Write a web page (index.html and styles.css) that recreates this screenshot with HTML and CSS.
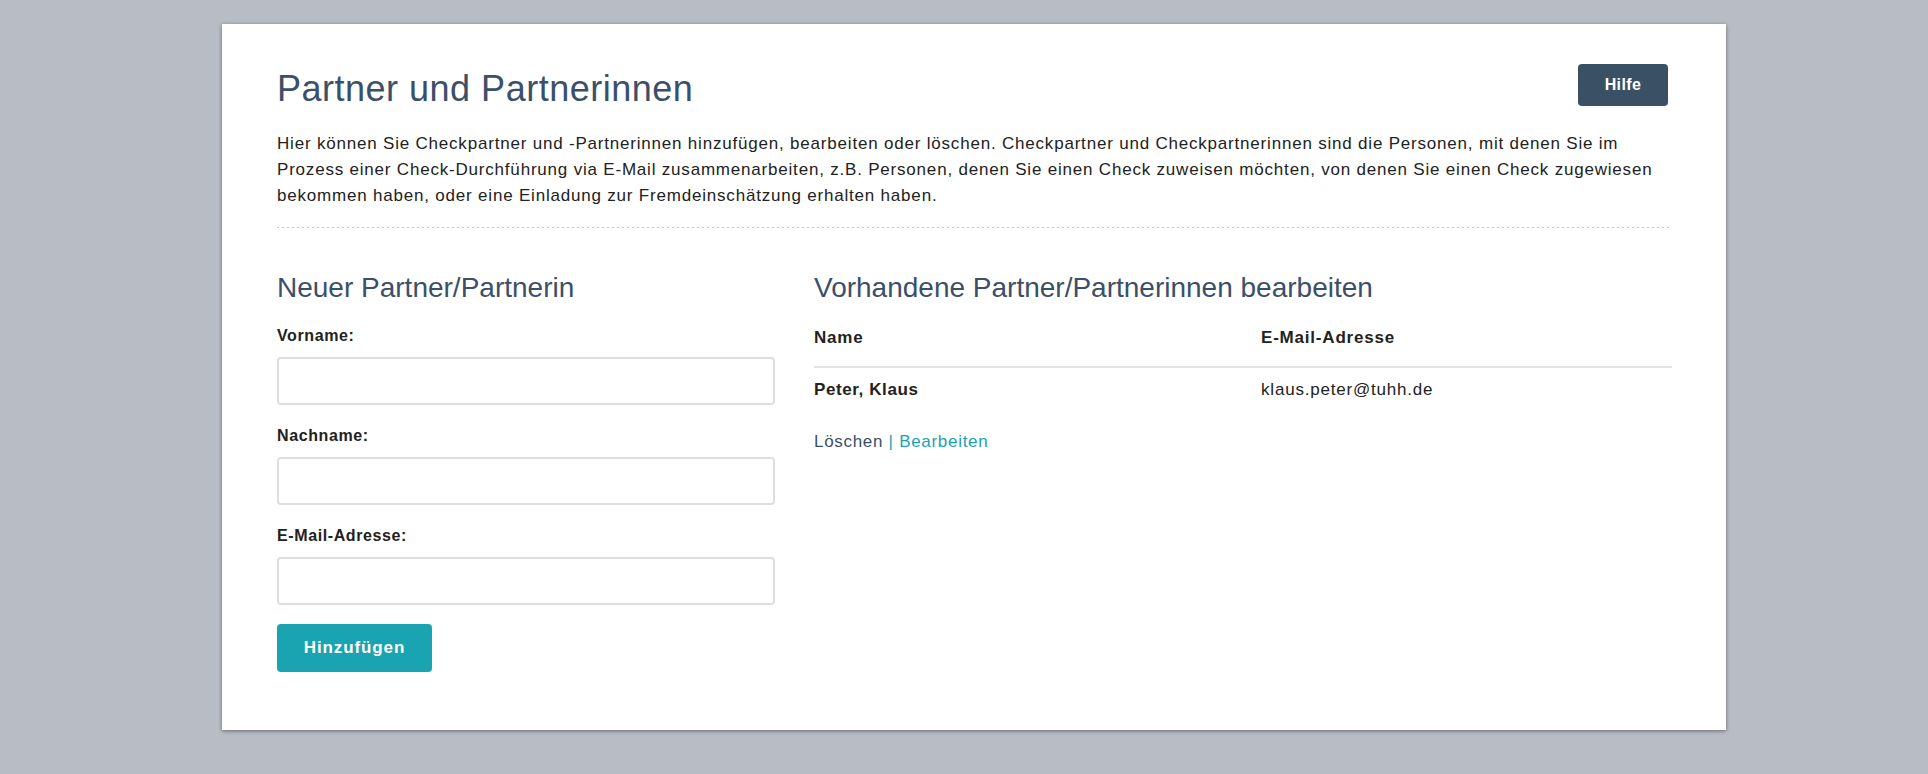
FILE: index.html
```html
<!DOCTYPE html>
<html lang="de">
<head>
<meta charset="utf-8">
<title>Partner und Partnerinnen</title>
<link rel="stylesheet" href="styles.css">
</head>
<body>
<main class="card">
  <header class="page-head">
    <h1 class="page-title">Partner und Partnerinnen</h1>
    <button class="btn btn-help" type="button">Hilfe</button>
  </header>
  <p class="intro">Hier können Sie Checkpartner und -Partnerinnen hinzufügen, bearbeiten oder löschen. Checkpartner und Checkpartnerinnen sind die Personen, mit denen Sie im Prozess einer Check-Durchführung via E-Mail zusammenarbeiten, z.B. Personen, denen Sie einen Check zuweisen möchten, von denen Sie einen Check zugewiesen bekommen haben, oder eine Einladung zur Fremdeinschätzung erhalten haben.</p>
  <div class="divider"></div>
  <div class="columns">
    <section class="col-new">
      <h2 class="section-title">Neuer Partner/Partnerin</h2>
      <form class="partner-form">
        <div class="field">
          <label class="field-label" for="vorname">Vorname:</label>
          <input class="field-input" id="vorname" type="text">
        </div>
        <div class="field">
          <label class="field-label" for="nachname">Nachname:</label>
          <input class="field-input" id="nachname" type="text">
        </div>
        <div class="field">
          <label class="field-label" for="email">E-Mail-Adresse:</label>
          <input class="field-input" id="email" type="text">
        </div>
        <button class="btn btn-add" type="button">Hinzufügen</button>
      </form>
    </section>
    <section class="col-list">
      <h2 class="section-title">Vorhandene Partner/Partnerinnen bearbeiten</h2>
      <table class="partner-table">
        <thead>
          <tr><th class="col-name">Name</th><th>E-Mail-Adresse</th></tr>
        </thead>
        <tbody>
          <tr><td class="cell-name">Peter, Klaus</td><td>klaus.peter@tuhh.de</td></tr>
        </tbody>
      </table>
      <div class="row-actions"><a class="link-delete" href="#">Löschen</a><span class="link-edit"> | <a href="#">Bearbeiten</a></span></div>
    </section>
  </div>
</main>
</body>
</html>
```
FILE: styles.css
```css
html, body {
  margin: 0;
  padding: 0;
}
body {
  background: #b8bcc5;
  font-family: "Liberation Sans", Arial, Helvetica, sans-serif;
  color: #222;
  padding: 24px 0 44px 222px;
}
.card {
  width: 1504px;
  box-sizing: border-box;
  background: #fff;
  padding: 40px 54px 58px 55px;
  box-shadow: 0 1px 4px rgba(0, 0, 0, 0.45);
}
.page-head {
  display: flex;
  justify-content: space-between;
  align-items: flex-start;
}
.page-title {
  margin: 3px 0 0;
  font-size: 36px;
  letter-spacing: 0.5px;
  line-height: 44px;
  font-weight: normal;
  color: #3b5068;
}
.btn {
  border: 0;
  border-radius: 4px;
  color: #fff;
  font-family: inherit;
  font-weight: bold;
  cursor: pointer;
  padding: 0;
}
.btn-help {
  width: 90px;
  height: 42px;
  margin-right: 4px;
  background: #3a5064;
  font-size: 16px;
  letter-spacing: 0.4px;
}
.intro {
  margin: 20px 0 0;
  font-size: 17px;
  letter-spacing: 0.8px;
  line-height: 26px;
}
.divider {
  margin-top: 18px;
  height: 1px;
  background-image: linear-gradient(to right, #c6c6c6 2px, transparent 2px);
  background-size: 5px 1px;
  background-repeat: repeat-x;
}
.columns {
  display: grid;
  grid-template-columns: 498px 1fr;
  column-gap: 39px;
  margin-top: 43px;
}
.section-title {
  margin: 0;
  font-size: 28px;
  line-height: 34px;
  font-weight: normal;
  color: #3b5068;
}
.partner-form {
  margin-top: 21px;
}
.field {
  margin-bottom: 21px;
}
.field-label {
  display: block;
  font-size: 16px;
  letter-spacing: 0.6px;
  line-height: 20px;
  font-weight: bold;
  color: #222;
  margin-bottom: 11px;
}
.field-input {
  display: block;
  width: 100%;
  height: 48px;
  box-sizing: border-box;
  border: 2px solid #dedede;
  border-radius: 4px;
  background: #fff;
  margin: 0;
}
.btn-add {
  margin-top: -2px;
  width: 155px;
  height: 48px;
  background: #1aa3b0;
  font-size: 17px;
  letter-spacing: 0.9px;
}
.partner-table {
  width: 100%;
  border-collapse: collapse;
  font-size: 17px;
  letter-spacing: 0.8px;
}
.partner-table th {
  text-align: left;
  font-weight: bold;
  line-height: 20px;
  padding: 23px 0 18px;
  border-bottom: 2px solid #e3e3e3;
}
.partner-table th.col-name {
  width: 447px;
}
.partner-table td {
  line-height: 20px;
  padding: 12px 0;
}
.partner-table td.cell-name {
  font-weight: bold;
  letter-spacing: 0.6px;
}
.row-actions {
  margin-top: 20px;
  font-size: 17px;
  letter-spacing: 0.7px;
  line-height: 20px;
}
.row-actions a {
  text-decoration: none;
}
.link-delete {
  color: #3b5068;
}
.link-edit,
.link-edit a {
  color: #1aa3b0;
}
```
